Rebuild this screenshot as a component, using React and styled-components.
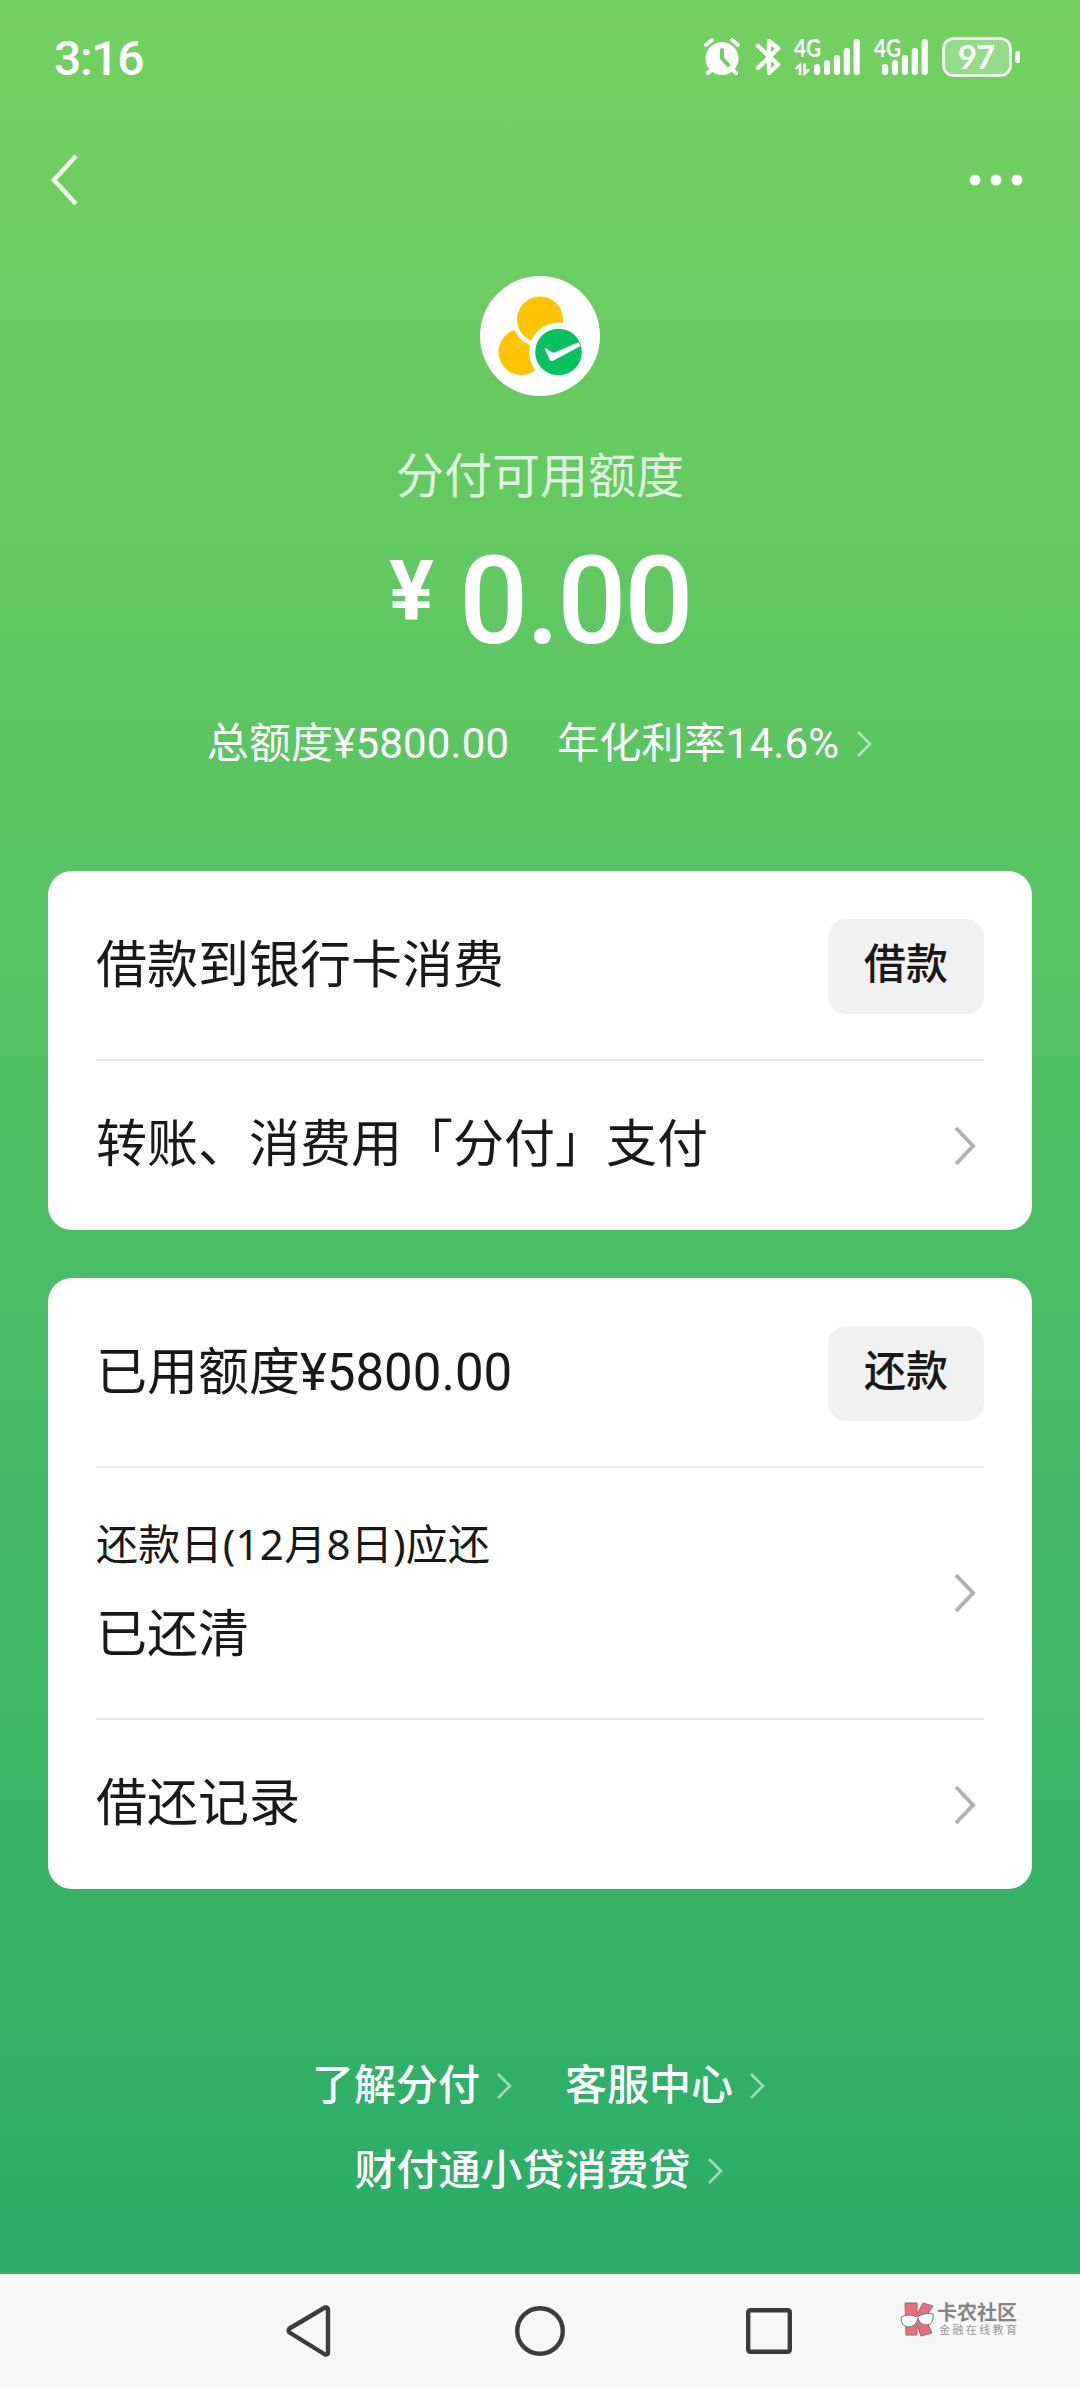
import React from "react"
import styled, { createGlobalStyle } from "styled-components";

const GlobalStyle = createGlobalStyle`
  body {
    margin: 0;
    font-family: Roboto, "Noto Sans CJK SC", sans-serif;
  }

  * {
    box-sizing: border-box;
  }
`;

const Screen = styled.div`
  display: flex;
  flex-direction: column;
  width: 1080px;
  height: 2388px;
  overflow: hidden;
`;

const Page = styled.main`
  display: flex;
  flex-direction: column;
  height: 2274px;
  color: #fff;
  background: linear-gradient(#74d160, #2aad68);
`;

const StatusBar = styled.div`
  display: flex;
  justify-content: space-between;
  height: 115px;
  padding: 36px 58px 0 54px;
`;

const Time = styled.div`
  font: 500 48px/46px Roboto, sans-serif;
  letter-spacing: -1.3px;
`;

const StatusIcons = styled.div`
  display: flex;

  svg {
    display: block;
    overflow: visible;
  }
`;

const NavBar = styled.header`
  display: flex;
  justify-content: space-between;
  align-items: center;
  height: 130px;
  padding: 0 57px 0 50px;
`;

const Summary = styled.section`
  display: flex;
  flex-direction: column;
  align-items: center;
  height: 626px;
  padding-top: 31px;
`;

const Label = styled.div`
  margin-top: 46px;
  font-size: 48px;
  line-height: 70px;
  color: rgba(255, 255, 255, 0.8);
`;

const Amount = styled.div`
  display: flex;
  align-items: flex-start;
  gap: 25px;
  height: 140px;
  margin-top: 20px;
  font-weight: 500;
  font-size: 122px;
  line-height: 140px;
  letter-spacing: -2.5px;
`;

const Currency = styled.span`
  font-weight: 700;
  font-size: 84px;
  line-height: 119px;
  letter-spacing: 0;
`;

const Details = styled.div`
  display: flex;
  align-items: center;
  margin-top: 42px;
  font-size: 42px;
  line-height: 60px;
  letter-spacing: 0.15px;

  span + span {
    margin-left: 48px;
  }

  svg {
    margin-left: 17px;
  }
`;

const Card = styled.section`
  margin: 0 48px 48px;
  padding: 0 48px;
  border-radius: 24px;
  background: #fff;
  color: #191919;
`;

const Row = styled.div`
  display: flex;
  justify-content: space-between;
  align-items: center;
  height: ${({ $height }) => $height}px;

  &:first-child {
    padding-top: 3px;
  }

  & + & {
    border-top: 2px solid #e8e8e8;
  }

  svg {
    margin-right: 7px;
  }
`;

const RowText = styled.div`
  padding-bottom: 2px;
  font-size: 51px;
  line-height: 76px;
`;

const SmallText = styled.div`
  font-family: "Noto Sans", "Noto Sans CJK SC", sans-serif;
  font-size: 42px;
  line-height: 62px;
  letter-spacing: 0.25px;
  padding-top: 1px;
  margin-bottom: 22px;
`;

const Button = styled.button`
  width: 156px;
  height: 95px;
  padding: 0 0 4px;
  border: none;
  border-radius: 18px;
  background: #f1f1f1;
  color: #191919;
  font: 500 42px/60px Roboto, "Noto Sans CJK SC", sans-serif;
`;

const Links = styled.footer`
  display: flex;
  flex-wrap: wrap;
  justify-content: center;
  width: 560px;
  margin: 119px auto 0 259px;
  column-gap: 52px;
  row-gap: 25px;
`;

const Link = styled.a`
  display: flex;
  align-items: center;
  gap: 16px;
  font-weight: 500;
  font-size: 42px;
  line-height: 60px;
`;

const SystemBar = styled.nav`
  display: flex;
  align-items: center;
  height: 114px;
  padding-left: 286px;
  background: #f7f7f7;
`;

const NavIcon = styled.svg`
  width: 50px;
  height: 54px;
  margin-right: ${({ $gap }) => $gap}px;
  fill: none;
  stroke: #3c3c3c;
  stroke-width: 4.4;
  stroke-linejoin: round;
`;

const Brand = styled.div`
  display: flex;
  gap: 2px;
  margin-top: -25px;
`;

const BrandText = styled.div`
  display: flex;
  flex-direction: column;
  padding-top: 1px;
  color: #858585;
  font: 700 20px/22px "Noto Sans CJK SC", sans-serif;

  small {
    margin-left: 2px;
    font-weight: 400;
    font-size: 11px;
    line-height: 13px;
    letter-spacing: 2.4px;
    color: #999;
  }
`;

const Arrow = ({ small }) =>
  small ? (
    <svg width="17" height="30" fill="none" stroke="#fff" strokeWidth="2.6" opacity="0.55">
      <path d="M2 3 14 15 2 27" />
    </svg>
  ) : (
    <svg width="24" height="42" fill="none" stroke="#b2b2b2" strokeWidth="4">
      <path d="M3 3 20 21 3 39" />
    </svg>
  )

// heights of the signal bars, shortest first
const bars = [11, 15, 20, 27, 36];

const Signal = ({ width, start, data }) => (
  <svg width={width} height="42" fill="#fff">
    <text x="0" y="21" fontFamily="Lato" fontWeight="700" fontSize="25" textLength="27" lengthAdjust="spacingAndGlyphs">4G</text>
    {data && (
      <path d="M1.5 33 6 29V39M10.5 27.5V37.5L15 33.5" fill="none" stroke="#fff" strokeWidth="2.6" />
    )}
    {bars.map((bar, index) => (
      <rect key={bar} x={start + index * 9.9} y={39 - bar} width="6.2" height={bar} rx="3" />
    ))}
  </svg>
)

const Status = () => (
  <StatusIcons>
    <svg width="51" height="42" fill="none" stroke="#fff" strokeWidth="5" strokeLinecap="round">
      <circle cx="20" cy="22.5" r="16.5" fill="#fff" stroke="none" />
      <path d="M4 9 10 4M30 4 36 9M9 34 6 37M31 34 34 37" strokeWidth="4" />
      <path d="M20 14V22L26 29" stroke="#70cf60" strokeWidth="4" />
    </svg>
    <svg width="41" height="42" fill="none" stroke="#fff" strokeWidth="4.4" strokeLinejoin="round" strokeLinecap="round">
      <path d="M5 10 25 28.5 16 37V5L25 12.5 5 32" />
    </svg>
    <Signal width={80} start={20} data />
    <Signal width={68} start={8} />
    <svg width="80" height="42">
      <rect x="1.5" y="2.5" width="67" height="37" rx="10" fill="#fff" fillOpacity="0.25" stroke="#fff" strokeWidth="2.6" />
      <rect x="73" y="15" width="5" height="12" rx="2.5" fill="#fff" />
      <text x="34" y="32.5" textAnchor="middle" fontFamily="Lato" fontWeight="700" fontSize="33" letterSpacing="-1" fill="#fff">97</text>
    </svg>
  </StatusIcons>
)

const Logo = () => (
  <svg width="120" height="120">
    <circle cx="60" cy="60" r="60" fill="#fff" />
    <circle cx="41.5" cy="76" r="23" fill="#ffc300" />
    <circle cx="60" cy="43.5" r="27.5" fill="#fff" />
    <circle cx="60" cy="43.5" r="23" fill="#ffc300" />
    <circle cx="78.5" cy="76" r="29.5" fill="#fff" />
    <circle cx="78.5" cy="76" r="23.3" fill="#07c160" />
    <path d="M64.5 72.5Q65.5 71.5 66.5 72.5L71.5 76Q73 77 75 76.2L98.5 66.3 100.5 70 73.5 84.5Q71 86 69.5 83.5Z" fill="#fff" />
  </svg>
)

const App = () => {
  return (
    <Screen>
      <GlobalStyle />
      <Page>
        <StatusBar>
          <Time>3:16</Time>
          <Status />
        </StatusBar>
        <NavBar>
          <svg width="30" height="54" fill="none" stroke="#fff" strokeWidth="4.5" opacity="0.9">
            <path d="M26 3 4 27 26 51" />
          </svg>
          <svg width="54" height="12" fill="#fff">
            <circle cx="6" cy="6" r="5.5" />
            <circle cx="27" cy="6" r="5.5" />
            <circle cx="48" cy="6" r="5.5" />
          </svg>
        </NavBar>
        <Summary>
          <Logo />
          <Label>分付可用额度</Label>
          <Amount>
            <Currency>¥</Currency>0.00
          </Amount>
          <Details>
            <span>总额度¥5800.00</span>
            <span>年化利率14.6%</span>
            <Arrow small />
          </Details>
        </Summary>
        <Card>
          <Row $height={188}>
            <RowText>借款到银行卡消费</RowText>
            <Button>借款</Button>
          </Row>
          <Row $height={171}>
            <RowText>转账、消费用「分付」支付</RowText>
            <Arrow />
          </Row>
        </Card>
        <Card>
          <Row $height={188}>
            <RowText>已用额度¥5800.00</RowText>
            <Button>还款</Button>
          </Row>
          <Row $height={252}>
            <div>
              <SmallText>还款日(12月8日)应还</SmallText>
              <RowText>已还清</RowText>
            </div>
            <Arrow />
          </Row>
          <Row $height={171}>
            <RowText>借还记录</RowText>
            <Arrow />
          </Row>
        </Card>
        <Links>
          <Link>了解分付<Arrow small /></Link>
          <Link>客服中心<Arrow small /></Link>
          <Link>财付通小贷消费贷<Arrow small /></Link>
        </Links>
      </Page>
      <SystemBar>
        <NavIcon $gap={179}>
          <path d="M3.5 24.5Q2 27 3.5 28.5L39 50.5Q42 51 42 48.5V5.5Q42 3 39 3.5Z" />
        </NavIcon>
        <NavIcon $gap={181}>
          <circle cx="25" cy="27" r="22.8" />
        </NavIcon>
        <NavIcon $gap={104}>
          <rect x="2.2" y="6.2" width="41.6" height="41.6" rx="2" />
        </NavIcon>
        <Brand>
          <svg width="35" height="38" stroke="#777" strokeWidth="1">
            <path d="M5 3H17V14L23 3 33 6 25 18 32 33 21 36 17 25V35H6Z" fill="#ee6b7d" />
            <path d="M1 17Q9 13 17 17 25 12 33 14 34 25 26 25 20 25 18 18 16 27 8 27 1 26 1 17Z" fill="#fff" />
          </svg>
          <BrandText>
            卡农社区
            <small>金融在线教育</small>
          </BrandText>
        </Brand>
      </SystemBar>
    </Screen>
  )
}

export default App
